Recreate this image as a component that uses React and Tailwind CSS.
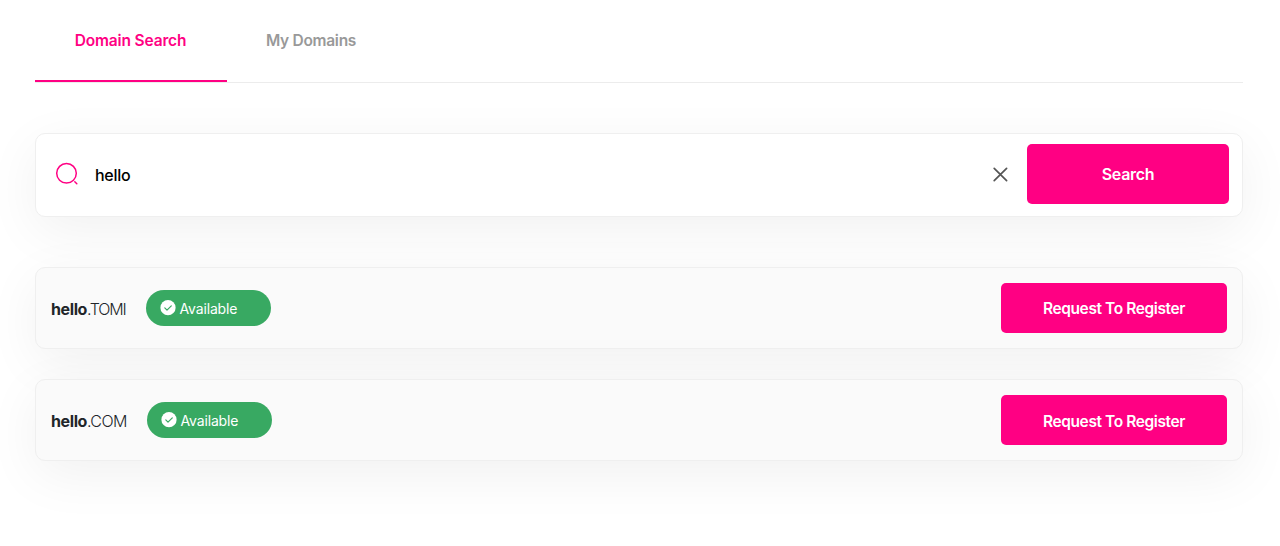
import React, { useState } from 'react';

const tabs = [
  { id: 'search', label: 'Domain Search', width: 'w-48 tracking-[-0.16px] pr-px' },
  { id: 'mine', label: 'My Domains', width: 'w-[168px] tracking-[-0.28px]' },
];

const results = [
  { ext: 'TOMI', nameClass: 'w-[95px]', extClass: 'tracking-[-1.2px]' },
  { ext: 'COM', nameClass: 'w-24', extClass: 'tracking-[-0.5px]' },
];

function SearchIcon() {
  return (
    <svg width="24" height="24" viewBox="0 0 24 24" fill="none" stroke="#ff0083" strokeWidth="1.5" strokeLinecap="round">
      <circle cx="11.5" cy="11.3" r="9.8" />
      <path d="M19.8 19.8l2 2" />
    </svg>
  );
}

function CheckBadge() {
  return (
    <svg width="16" height="16" viewBox="0 0 16 16" fill="none">
      <circle cx="8" cy="7.7" r="7.6" fill="#fff" />
      <path d="M4.8 7.9l2.2 2.2 4.3-4.3" stroke="#38a962" strokeWidth="1.2" strokeLinecap="round" strokeLinejoin="round" />
    </svg>
  );
}

function DomainRow({ name, ext, nameClass, extClass }) {
  return (
    <div className="h-[82px] flex items-start justify-between rounded-[10px] border border-[#efefef] bg-[#fafafa] px-[15px] pt-[14.5px] shadow-[0_14px_54px_rgba(0,0,0,0.06)]">
      <div className="h-[50px] flex items-center">
        <p className={`${nameClass} shrink-0 whitespace-nowrap text-base leading-6 tracking-[-0.4px] text-[#212529] pt-[3px]`}>
          <span className="font-bold">{name}</span>
          <span className={`font-light ${extClass}`}>.{ext}</span>
        </p>
        <div className="w-[125px] h-9 flex items-center gap-1 rounded-full bg-[#38a962] pl-[13.5px] text-sm text-white">
          <CheckBadge />
          <span className="tracking-[-0.15px] pt-0.5">Available</span>
        </div>
      </div>
      <button className="w-[226px] h-[50px] rounded-[5px] bg-[#ff0083] text-[15.5px] font-semibold tracking-[-0.4px] text-white pt-[3px] cursor-pointer">
        Request To Register
      </button>
    </div>
  );
}

export default function App() {
  const [activeTab, setActiveTab] = useState('search');
  const [query, setQuery] = useState('hello');

  return (
    <div className="h-[546px] overflow-hidden bg-white pl-[35px] pr-[37px] font-['Inter',sans-serif]">
      <nav className="h-[83px] flex border-b border-[#ececec]">
        {tabs.map((tab) => (
          <button
            key={tab.id}
            onClick={() => setActiveTab(tab.id)}
            className={`${tab.width} h-[82px] pt-0.5 text-[15.5px] font-semibold cursor-pointer border-b-2 ${
              activeTab === tab.id ? 'border-[#ff0083] text-[#ff0083]' : 'border-transparent text-[#999]'
            }`}
          >
            {tab.label}
          </button>
        ))}
      </nav>

      <div className="mt-[50px] h-[83.5px] flex items-start rounded-[10px] border border-[#efefef] bg-white pl-[19px] pr-[13px] pt-[9.5px] shadow-[0_14px_54px_rgba(0,0,0,0.06)]">
        <div className="h-[60px] flex flex-1 items-center">
          <SearchIcon />
          <input
            value={query}
            onChange={(e) => setQuery(e.target.value)}
            className="ml-4 flex-1 bg-transparent pt-0.5 text-base font-medium tracking-[-0.3px] text-black outline-none"
          />
          <button onClick={() => setQuery('')} className="mr-[19px] cursor-pointer" aria-label="Clear">
            <svg width="16" height="16" viewBox="0 0 16 16" fill="none" stroke="#555" strokeWidth="1.7" strokeLinecap="round">
              <path d="M2.2 2.3l12.4 12.4M14.6 2.3L2.2 14.7" />
            </svg>
          </button>
        </div>
        <button className="w-[202px] h-[60px] rounded-[5px] bg-[#ff0083] text-base font-semibold tracking-[-0.3px] text-white cursor-pointer">
          Search
        </button>
      </div>

      <div className="mt-[50.5px] flex flex-col gap-[30.4px]">
        {results.map((item) => (
          <DomainRow key={item.ext} name="hello" {...item} />
        ))}
      </div>
    </div>
  );
}
